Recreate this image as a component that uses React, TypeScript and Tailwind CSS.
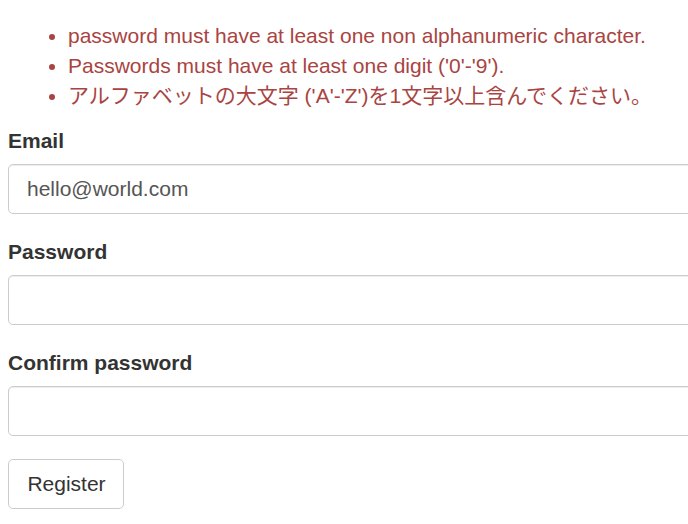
const errors = [
  'password must have at least one non alphanumeric character.',
  "Passwords must have at least one digit ('0'-'9').",
  "アルファベットの大文字 ('A'-'Z')を1文字以上含んでください。",
];

function Field({ label, value, type = 'text' }: { label: string; value?: string; type?: string }) {
  return (
    <div className="mb-[23px]">
      <label className="block font-bold text-[#333] text-[21px] leading-[28px] mb-[9px] pt-[1px]">{label}</label>
      <input
        type={type}
        defaultValue={value}
        className="block w-[760px] h-[50px] px-[18px] text-[21px] text-[#555] bg-white border border-[#ccc] rounded-[5px] shadow-[inset_0_1px_1px_rgba(0,0,0,0.075)] outline-none"
      />
    </div>
  );
}

export default function App() {
  return (
    <div
      className="w-[688px] h-[524px] overflow-hidden bg-white px-[8px]"
      style={{ fontFamily: '"Liberation Sans", Arial, "Noto Sans CJK JP", sans-serif' }}
    >
      {/* Validation summary */}
      <ul className="list-disc pl-[60px] pt-[21px] mb-[15px] text-[#a94442] text-[21px] leading-[30px]">
        {errors.map((e) => (
          <li key={e}>{e}</li>
        ))}
      </ul>

      <form onSubmit={(e) => e.preventDefault()}>
        <Field label="Email" value="hello@world.com" />
        <Field label="Password" type="password" />
        <Field label="Confirm password" type="password" />
        <button
          type="submit"
          className="h-[50px] w-[116px] pl-[1px] text-[21px] text-[#333] bg-white border border-[#ccc] rounded-[5px]"
        >
          Register
        </button>
      </form>
    </div>
  );
}
